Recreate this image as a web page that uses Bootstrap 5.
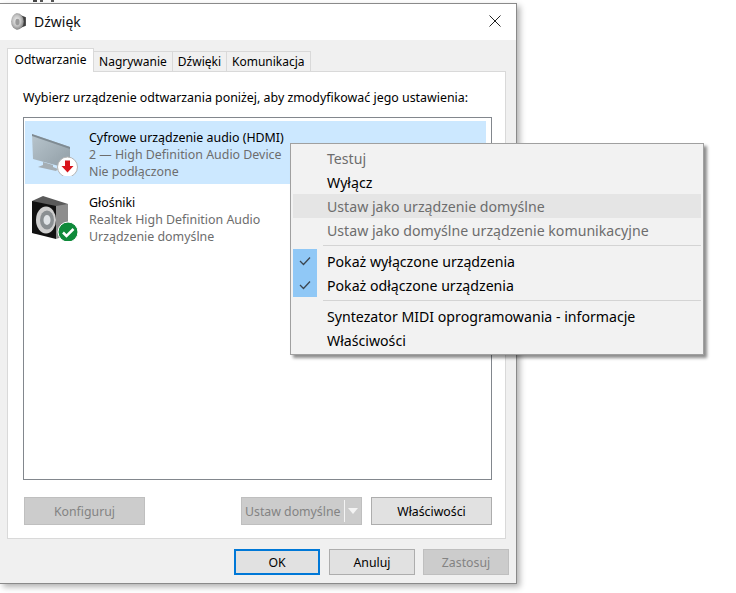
<!DOCTYPE html>
<html lang="pl">
<head>
<meta charset="utf-8">
<title>Dźwięk</title>
<link href="https://cdn.jsdelivr.net/npm/bootstrap@5.3.0/dist/css/bootstrap.min.css" rel="stylesheet">
<style>
html,body{height:593px;overflow:hidden;background:#fff}
body{font-family:"Noto Sans","Liberation Sans",sans-serif;font-size:12.4px;line-height:17px;color:#000;position:relative}
.topmarks{height:3px;position:relative}
.topmarks svg{display:block}
.win{width:517px;height:581px;border:1px solid #8a8a8a;border-left:0;box-shadow:3px 3px 6px rgba(0,0,0,.3);background:#f0f0f0;display:flex;flex-direction:column}
.ttl{height:36px;background:#fff;flex:none;padding:0 0 2px 10px;gap:7px;font-size:14px;color:#111}
.ttl-x{margin-left:auto;margin-right:15px;display:block}
.pane{padding:8px 10px 0 7px;flex:1;display:flex;flex-direction:column}
.tabrow{height:24px;flex:none;align-items:flex-end;border:0;position:relative;z-index:1;margin-bottom:-1px;flex-wrap:nowrap;font-size:12px}
.tabrow .tb{height:21px;border:1px solid #d9d9d9;border-bottom:1px solid #d9d9d9;border-left:0;background:#f0f0f0;color:#000;padding:0 5px;line-height:19px;white-space:nowrap}
.tabrow .tb.on{height:24px;background:#fff;border:1px solid #d9d9d9;border-bottom:0;padding:0 6.6px;line-height:21px}
.panel{background:#fff;border:1px solid #d9d9d9;height:468px;padding:0 13px 0 15px;flex:none;display:flex;flex-direction:column}
.hint{height:17px;white-space:nowrap;margin-top:17px}
.devs{height:363px;margin-top:11px;border:1px solid #82878d;background:#fff;padding:3px 5px 3px 1px;border-radius:0;flex:none}
.dev{height:63px;border:0;border-radius:0;padding:0 0 0 3px;display:flex;gap:9px;background:#fff;color:#000}
.dev.sel{background:#cce8ff;margin-bottom:2px}
.dev svg{flex:none;margin-top:3px}
.dev .txt{padding-top:8px;line-height:17px;white-space:nowrap}
.gr{color:#6d6d6d}
.acts{margin-top:17px;gap:9px;padding-left:1px}
.wb{border:1px solid #adadad;background:#e1e1e1;color:#000;border-radius:0;font-size:12.3px;line-height:17px;padding:0;height:28px;width:121px;display:flex;align-items:center;justify-content:center;flex:none}
.wb.dis{background:#ccc;border-color:#bfbfbf;color:#838383;opacity:1}
.wb.split{justify-content:flex-start;padding-left:3px;color:#838383;background:#ccc;border-color:#bfbfbf;margin-left:auto}
.split-sep{width:1px;height:22px;background:#f4f4f4;margin-left:4px}
.split-arr{width:0;height:0;border-left:5px solid transparent;border-right:5px solid transparent;border-top:6px solid #f4f4f4;margin-left:3px}
.foot{margin-top:10px;gap:8px;justify-content:flex-end;margin-right:-3px}
.foot .wb{width:86px;height:26px}
.foot .wb.ok{border:2px solid #0078d7;margin-right:1px}
.ctx{display:block;position:absolute;left:290px;top:143px;width:414px;height:212px;padding:2px;background:#f2f2f2;border:1px solid #a0a0a0;border-radius:0;box-shadow:3px 3px 3px rgba(0,0,0,.45);font-size:14.15px;margin:0;min-width:0}
.ctx-it{height:24px;line-height:25px;padding-left:34px;color:#000;position:relative;white-space:nowrap}
.ctx-it.off{color:#6d6d6d}
.ctx-it.hov{background:#e5e5e5}
.ctx-sep{height:1px;background:#d4d4d4;margin:3px 0 3px 30px}
.ctx-chk{position:absolute;left:0;top:0;width:24px;height:24px;background:#90c8f6;display:flex;align-items:center;justify-content:center}
</style>
</head>
<body>
<div class="topmarks"><svg width="120" height="3"><rect x="33" y="0" width="4" height="2" fill="#444"/><rect x="40" y="0" width="3" height="2" fill="#555"/><rect x="51" y="0" width="3" height="2" fill="#555"/></svg></div>
<div class="win">
  <div class="ttl d-flex align-items-center">
    <svg width="17" height="19" viewBox="0 0 16 18"><defs><radialGradient id="sg" cx=".45" cy=".45" r=".6"><stop offset="0" stop-color="#f4f4f4"/><stop offset=".55" stop-color="#c2c2c2"/><stop offset="1" stop-color="#7a7a7a"/></radialGradient></defs><path d="M6 1.500 15 5v8L6 16.500z" fill="#3d3d3d"/><ellipse cx="7" cy="9" rx="6" ry="7.800" fill="url(#sg)"/><ellipse cx="7" cy="9.500" rx="2" ry="3" fill="#9a9a9a"/></svg>
    <span>Dźwięk</span>
    <svg class="ttl-x" width="12" height="12" viewBox="0 0 12 12"><path d="M.5.5l11 11M11.500.5l-11 11" stroke="#222" stroke-width="1" fill="none"/></svg>
  </div>
  <div class="pane">
    <div class="nav tabrow">
      <div class="tb on">Odtwarzanie</div>
      <div class="tb">Nagrywanie</div>
      <div class="tb">Dźwięki</div>
      <div class="tb">Komunikacja</div>
    </div>
    <div class="panel">
      <div class="hint">Wybierz urządzenie odtwarzania poniżej, aby zmodyfikować jego ustawienia:</div>
      <div class="list-group devs">
        <div class="list-group-item dev sel">
          <svg width="52" height="52" viewBox="0 0 52 52">
            <defs><linearGradient id="mon" x1="0" y1="0" x2="1" y2="1"><stop offset="0" stop-color="#b8c5cd"/><stop offset="1" stop-color="#8f9ca4"/></linearGradient></defs>
            <path d="M15 38l10 3v2l5 2-2 2-18-4 5-2z" fill="#a5aeb4"/>
            <path d="M4 10 42 23v22L5 35z" fill="url(#mon)"/><path d="M4 10 42 23v2L4 12z" fill="#7f8b93"/>
            <circle cx="39.500" cy="43" r="10" fill="#fff" stroke="#b5b5b5"/>
            <path d="M37 36.500h5v5.500h3.500l-6 6.500-6-6.500H37z" fill="#d8141c"/>
          </svg>
          <div class="txt">Cyfrowe urządzenie audio (HDMI)<br><span class="gr">2 — High Definition Audio Device</span><br><span class="gr">Nie podłączone</span></div>
        </div>
        <div class="list-group-item dev">
          <svg width="52" height="52" viewBox="0 0 52 52">
            <path d="M4 12 15 7l25 8v33l-36-4z" fill="#5a5a5a"/>
            <path d="M4 12l24 5v33L4 44z" fill="#111"/>
            <path d="M28 17l12-2v31l-12 4z" fill="#8d8d8d"/>
            <ellipse cx="18" cy="31" rx="10" ry="13.500" fill="#cfcfcf"/>
            <ellipse cx="19" cy="31" rx="7" ry="9.500" fill="#8a8f92"/>
            <ellipse cx="19" cy="31" rx="3.500" ry="5" fill="#dfe3e6"/>
            <circle cx="40" cy="43" r="10" fill="#0f8a3a" stroke="#fff"/>
            <path d="M35 43.500l3.500 3.500 7-7" stroke="#fff" stroke-width="2.500" fill="none"/>
          </svg>
          <div class="txt">Głośniki<br><span class="gr">Realtek High Definition Audio</span><br><span class="gr">Urządzenie domyślne</span></div>
        </div>
      </div>
      <div class="acts d-flex">
        <button class="btn wb dis" disabled>Konfiguruj</button>
        <div class="wb split"><span>Ustaw domyślne</span><span class="split-sep"></span><span class="split-arr"></span></div>
        <button class="btn wb">Właściwości</button>
      </div>
    </div>
    <div class="foot d-flex">
      <button class="btn wb ok">OK</button>
      <button class="btn wb">Anuluj</button>
      <button class="btn wb dis" disabled>Zastosuj</button>
    </div>
  </div>
</div>
<div class="dropdown-menu ctx">
  <div class="ctx-it off">Testuj</div>
  <div class="ctx-it">Wyłącz</div>
  <div class="ctx-it off hov">Ustaw jako urządzenie domyślne</div>
  <div class="ctx-it off">Ustaw jako domyślne urządzenie komunikacyjne</div>
  <div class="ctx-sep"></div>
  <div class="ctx-it"><span class="ctx-chk"><svg width="12" height="10" viewBox="0 0 12 10"><path d="M1 5l3.500 3.500L11 1.500" stroke="#3c4650" stroke-width="1.300" fill="none"/></svg></span>Pokaż wyłączone urządzenia</div>
  <div class="ctx-it"><span class="ctx-chk"><svg width="12" height="10" viewBox="0 0 12 10"><path d="M1 5l3.500 3.500L11 1.500" stroke="#3c4650" stroke-width="1.300" fill="none"/></svg></span>Pokaż odłączone urządzenia</div>
  <div class="ctx-sep"></div>
  <div class="ctx-it">Syntezator MIDI oprogramowania - informacje</div>
  <div class="ctx-it">Właściwości</div>
</div>
<script src="https://cdn.jsdelivr.net/npm/bootstrap@5.3.0/dist/js/bootstrap.bundle.min.js"></script>
</body>
</html>
